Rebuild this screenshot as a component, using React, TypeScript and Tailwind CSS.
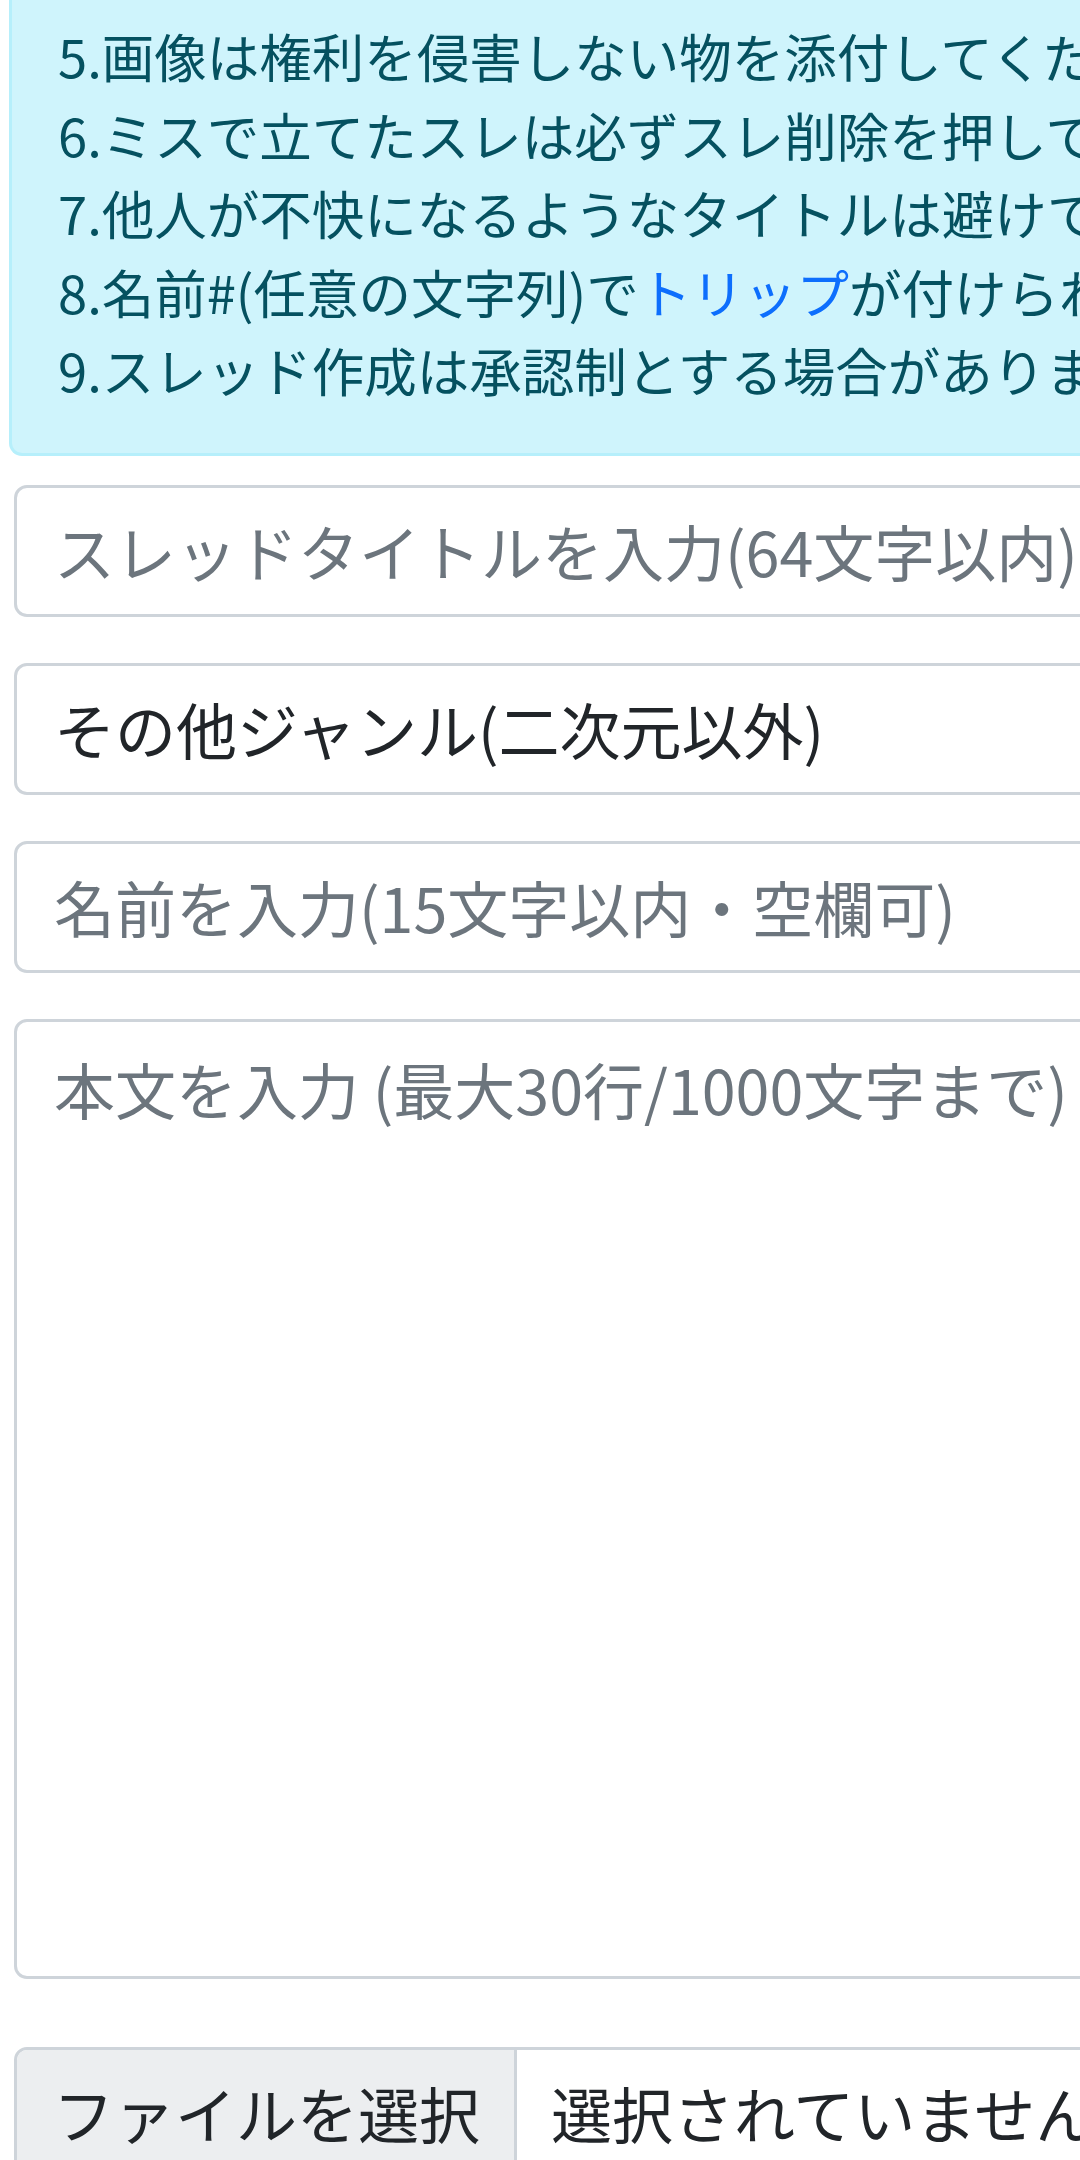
import React from "react";

const rules: React.ReactNode[] = [
  "5.画像は権利を侵害しない物を添付してください。",
  "6.ミスで立てたスレは必ずスレ削除を押してください。",
  "7.他人が不快になるようなタイトルは避けてください。",
  <>
    8.名前#(任意の文字列)で<a className="text-[#0d6efd]">トリップ</a>が付けられます。
  </>,
  "9.スレッド作成は承認制とする場合があります。",
];

export default function App() {
  return (
    <div className="w-[1080px] h-[2160px] overflow-hidden bg-white font-['Noto_Sans_CJK_JP','Noto_Sans',sans-serif]">
      <div className="w-[1500px] pl-[9px]">
        <div className="rounded-b-[13px] border-[3px] border-t-0 border-[#b6effb] bg-[#cff4fc] text-[#055160] text-[52.5px] leading-[78.5px] pt-[16px] pb-[44px] pl-[46px] whitespace-nowrap">
          {rules.map((r, i) => (
            <div key={i}>{r}</div>
          ))}
        </div>
      </div>
      <div className="w-[1500px] pl-[14px] mt-[29px] flex flex-col">
        <div className="flex flex-col gap-[46px]">
          <input
            readOnly
            placeholder="スレッドタイトルを入力(64文字以内)"
            className="h-[132px] w-full border-[3px] border-[#ced4da] rounded-[13px] px-[37px] text-[61px] text-[#212529] placeholder:text-[#6c757d] bg-white outline-none"
          />
          <div className="h-[132px] w-full border-[3px] border-[#ced4da] rounded-[13px] px-[37px] text-[61px] text-[#212529] bg-white flex items-center whitespace-nowrap">
            その他ジャンル(二次元以外)
          </div>
          <input
            readOnly
            placeholder="名前を入力(15文字以内・空欄可)"
            className="h-[132px] w-full border-[3px] border-[#ced4da] rounded-[13px] px-[37px] text-[61px] text-[#212529] placeholder:text-[#6c757d] bg-white outline-none"
          />
          <textarea
            readOnly
            placeholder="本文を入力 (最大30行/1000文字まで)"
            className="h-[960px] w-full border-[3px] border-[#ced4da] rounded-[13px] px-[37px] pt-[22px] text-[61px] leading-[90px] text-[#212529] placeholder:text-[#6c757d] bg-white outline-none resize-none"
          />
        </div>
        <div className="mt-[68px] h-[132px] w-full border-[3px] border-[#ced4da] rounded-[13px] overflow-hidden flex text-[61px] text-[#212529] bg-white">
          <div className="w-[500px] shrink-0 bg-[#eceef0] border-r-[3px] border-[#ced4da] flex items-center pl-[36px] whitespace-nowrap">
            ファイルを選択
          </div>
          <div className="flex items-center pl-[34px] whitespace-nowrap">選択されていません</div>
        </div>
      </div>
    </div>
  );
}
